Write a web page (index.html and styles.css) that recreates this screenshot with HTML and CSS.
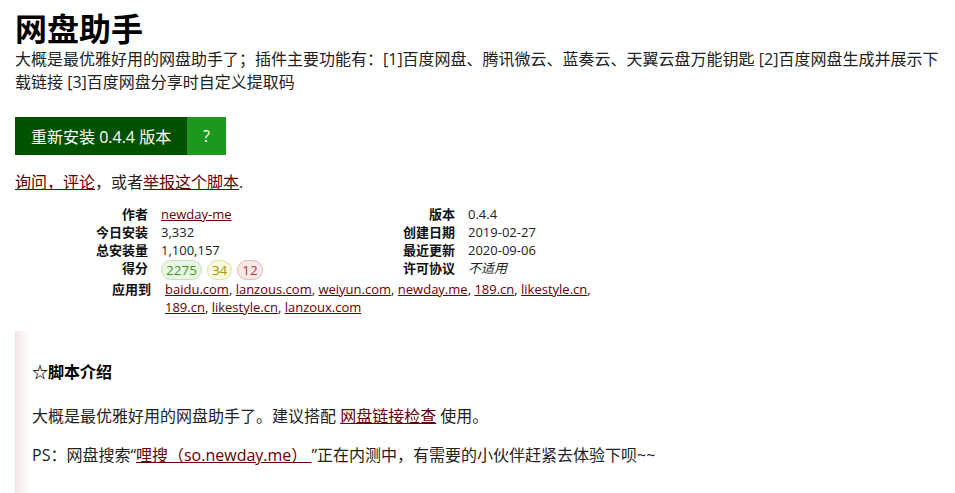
FILE: index.html
```
<!DOCTYPE html>
<html lang="zh-CN">
<head>
<meta charset="utf-8">
<title>网盘助手</title>
<link rel="stylesheet" href="styles.css">
</head>
<body>
<div class="page">
  <h2 class="title">网盘助手</h2>
  <p class="desc">大概是最优雅好用的网盘助手了；插件主要功能有：[1]百度网盘、腾讯微云、蓝奏云、天翼云盘万能钥匙 [2]百度网盘生成并展示下载链接 [3]百度网盘分享时自定义提取码</p>
  <div class="install">
    <a class="install-link" href="#">重新安装 0.4.4 版本</a><a class="install-help" href="#">?</a>
  </div>
  <p class="feedback"><a href="#">询问，评论</a>，或者<a href="#">举报这个脚本</a>.</p>
  <div class="stats">
    <span class="dt">作者</span><span class="dd"><a href="#">newday-me</a></span>
    <span class="dt">版本</span><span class="dd">0.4.4</span>
    <span class="dt">今日安装</span><span class="dd">3,332</span>
    <span class="dt">创建日期</span><span class="dd">2019-02-27</span>
    <span class="dt">总安装量</span><span class="dd">1,100,157</span>
    <span class="dt">最近更新</span><span class="dd">2020-09-06</span>
    <span class="dt">得分</span><span class="dd badges"><span class="badge good">2275</span><span class="badge ok">34</span><span class="badge bad">12</span></span>
    <span class="dt">许可协议</span><span class="dd"><i>不适用</i></span>
  </div>
  <div class="applies">
    <span class="dt">应用到</span>
    <span class="dd applies-list"><a href="#">baidu.com</a>, <a href="#">lanzous.com</a>, <a href="#">weiyun.com</a>, <a href="#">newday.me</a>, <a href="#">189.cn</a>, <a href="#">likestyle.cn</a>, <a href="#">189.cn</a>, <a href="#">likestyle.cn</a>, <a href="#">lanzoux.com</a></span>
  </div>
  <div class="additional">
    <h3 class="intro">☆脚本介绍</h3>
    <p>大概是最优雅好用的网盘助手了。建议搭配 <a href="#">网盘链接检查</a> 使用。</p>
    <p>PS：网盘搜索“<a href="#">哩搜（so.newday.me） </a>”正在内测中，有需要的小伙伴赶紧去体验下呗~~</p>
  </div>
</div>
</body>
</html>
```
FILE: styles.css
```
html, body {
  margin: 0;
  padding: 0;
  background: #fff;
}
body {
  font-family: "Open Sans", "Noto Sans CJK SC", sans-serif;
  color: #222;
  font-size: 16px;
}
a {
  color: #670000;
  text-decoration: underline;
}
.page {
  padding: 0 15px;
}
.title {
  font-size: 32px;
  font-weight: bold;
  line-height: 38px;
  margin: 0;
  padding-top: 10px;
  color: #000;
}
.desc {
  margin: 0;
  line-height: 23px;
  color: #222;
}
.install {
  display: flex;
  margin-top: 23px;
  height: 38px;
}
.install a {
  display: flex;
  align-items: center;
  color: #fff;
  text-decoration: none;
  font-size: 16px;
  white-space: nowrap;
  box-sizing: border-box;
}
.install-link {
  background: #005200;
  padding: 0 16px;
  width: 172px;
}
.install-help {
  background: #1e971e;
  width: 39px;
  justify-content: center;
}
.feedback {
  margin: 16px 0 0;
  line-height: 23px;
}
.stats {
  display: grid;
  grid-template-columns: 133px 160px 121px 1fr;
  column-gap: 13px;
  margin-top: 11px;
  font-size: 13px;
  line-height: 18px;
}
.dt {
  font-weight: bold;
  text-align: right;
  color: #111;
}
.dd {
  color: #222;
}
.dd i {
  font-style: italic;
}
.badges {
  display: flex;
  gap: 5px;
  padding-top: 1px;
}
.badge {
  display: inline-block;
  border: 1px solid;
  border-radius: 10px;
  padding: 0 4px;
  line-height: 18px;
  font-size: 13.5px;
}
.good {
  background: #e9f6e4;
  border-color: #c4e2b8;
  color: #3c9a28;
}
.ok {
  background: #f8f8de;
  border-color: #e4e2aa;
  color: #a69600;
}
.bad {
  background: #f8e8e8;
  border-color: #e2bcbc;
  color: #b03a3a;
}
.applies {
  display: flex;
  gap: 14px;
  margin-top: 0;
  font-size: 13px;
  line-height: 18px;
}
.applies .dt {
  width: 136px;
  flex: none;
}
.applies-list {
  width: 432px;
}
.additional {
  margin-top: 15px;
  padding: 14px 17px 20px;
  background: linear-gradient(to right, #f3e4e4 0, #f9f1f1 6px, #fff 16px);
  min-height: 160px;
}
.intro {
  font-size: 16px;
  font-weight: bold;
  margin: 16px 0 0;
  line-height: 23px;
  color: #000;
}
.additional p {
  margin: 21px 0 0;
  line-height: 23px;
}
.additional p + p {
  margin-top: 16px;
}
```
